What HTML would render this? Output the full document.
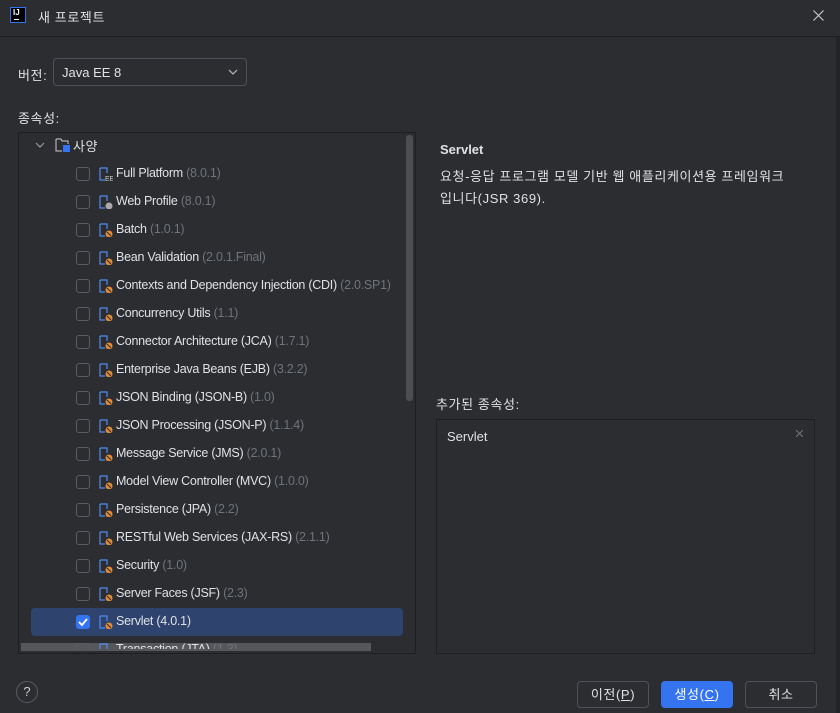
<!DOCTYPE html>
<html><head><meta charset="utf-8"><style>
*{box-sizing:border-box;margin:0;padding:0}
body{width:840px;height:713px;background:#2b2d30;font-family:"Liberation Sans","Noto Sans CJK KR",sans-serif;color:#dfe1e5;font-size:13px;position:relative;overflow:hidden}
.a{position:absolute}
.row{position:absolute;left:31px;width:372px;height:28px}
.cb{position:absolute;left:45px;top:7px;width:14px;height:14px;border:1px solid #5a5d63;border-radius:3px}
.ic{position:absolute;left:68px;top:7px;width:14px;height:14px}
.tx{position:absolute;left:85px;top:6px;white-space:nowrap;font-size:12.5px;letter-spacing:-0.25px}
.v{color:#6f737a}
.btn{position:absolute;top:681px;height:27px;border:1px solid #4e5157;border-radius:4px;text-align:center;line-height:25px}
.ko{letter-spacing:0.6px}
</style></head><body>
<div class="a" style="left:0;top:36px;width:840px;height:1px;background:#1e1f22"></div>
<div class="a" style="left:10px;top:7px;width:16px;height:16px;background:#000;border:1px solid #3574f0"><span style="position:absolute;left:2px;top:0;font-size:8px;color:#fff;font-weight:bold">IJ</span><span style="position:absolute;left:3px;top:11px;width:5px;height:1px;background:#fff"></span></div>
<div class="a ko" style="left:38px;top:7px;font-size:13px">새 프로젝트</div>
<svg class="a" style="left:813px;top:10px" width="11" height="11"><path d="M0.5 0.5l10 10M10.5 0.5l-10 10" stroke="#ccc" stroke-width="1.1"/></svg>
<div class="a ko" style="left:18px;top:65px">버전:</div>
<div class="a" style="left:53px;top:58px;width:194px;height:28px;border:1px solid #4e5157;border-radius:4px;background:#2b2d30"><span style="position:absolute;left:8px;top:6px">Java EE 8</span><svg class="a" style="left:174px;top:10px" width="10" height="7"><path d="M1 1l4 4 4-4" stroke="#aaa" fill="none" stroke-width="1.3"/></svg></div>
<div class="a ko" style="left:18px;top:108px">종속성:</div>
<div class="a" style="left:18px;top:132px;width:398px;height:522px;border:1px solid #1e1f22;overflow:hidden">
<svg class="a" style="left:16px;top:9px" width="10" height="7"><path d="M1 1l4 4 4-4" stroke="#999" fill="none" stroke-width="1.2"/></svg>
<svg class="a" style="left:36px;top:4px" width="16" height="16"><path d="M1 2h5l1 2h6v3M1 2v12h6" stroke="#ccc" fill="none"/><rect x="8" y="8" width="7" height="7" fill="#3574f0"/></svg>
<div class="a ko" style="left:54px;top:3px">사양</div>
<div class="a" style="left:387px;top:2px;width:7px;height:266px;background:#4c4e52;border-radius:3px"></div>
<div class="a" style="left:2px;top:510px;width:350px;height:8px;background:#5a5c60;opacity:.9"></div>
</div>
<div id="rows"></div>
<div class="a" style="left:440px;top:142px;font-weight:bold">Servlet</div>
<div class="a ko" style="left:440px;top:166px;line-height:22px">요청-응답 프로그램 모델 기반 웹 애플리케이션용 프레임워크<br>입니다(JSR 369).</div>
<div class="a ko" style="left:436px;top:394px">추가된 종속성:</div>
<div class="a" style="left:436px;top:419px;width:379px;height:235px;border:1px solid #1e1f22"><span style="position:absolute;left:10px;top:9px">Servlet</span><svg style="position:absolute;right:11px;top:10px" width="7" height="7"><path d="M0 0l7 7M7 0l-7 7" stroke="#777"/></svg></div>
<div class="a" style="left:836px;top:37px;width:4px;height:676px;background:#232427"></div>
<div class="a" style="left:16px;top:681px;width:22px;height:22px;border:1px solid #5a5d63;border-radius:50%;text-align:center;line-height:20px;color:#ccc">?</div>
<div class="btn ko" style="left:577px;width:72px">이전(<u>P</u>)</div>
<div class="btn ko" style="left:661px;width:72px;background:#3574f0;border-color:#3574f0;color:#fff">생성(<u>C</u>)</div>
<div class="btn ko" style="left:745px;width:72px">취소</div>
<script>
var items=[["Full Platform","(8.0.1)","ee"],["Web Profile","(8.0.1)","w"],["Batch","(1.0.1)"],["Bean Validation","(2.0.1.Final)"],["Contexts and Dependency Injection (CDI)","(2.0.SP1)"],["Concurrency Utils","(1.1)"],["Connector Architecture (JCA)","(1.7.1)"],["Enterprise Java Beans (EJB)","(3.2.2)"],["JSON Binding (JSON-B)","(1.0)"],["JSON Processing (JSON-P)","(1.1.4)"],["Message Service (JMS)","(2.0.1)"],["Model View Controller (MVC)","(1.0.0)"],["Persistence (JPA)","(2.2)"],["RESTful Web Services (JAX-RS)","(2.1.1)"],["Security","(1.0)"],["Server Faces (JSF)","(2.3)"],["Servlet","(4.0.1)"],["Transaction (JTA)","(1.3)"]];
var h="";items.forEach(function(it,i){var top=160+i*28;var sel=i==16;var badge=it[2]=="ee"?'<text x="6" y="14" font-size="7" fill="#ccc" font-family="Liberation Sans">EE</text>':it[2]=="w"?'<circle cx="10" cy="11" r="3.5" fill="#aaa"/>':'<circle cx="10" cy="11" r="3.5" fill="#e08a3c"/><path d="M8 9l4 4" stroke="#2b2d30"/>';
h+='<div class="row" style="top:'+top+'px;'+(sel?'background:#2e436e;border-radius:4px;':'')+(i==17?'height:13px;overflow:hidden;':'')+'"><div class="cb" style="'+(sel?'background:#3574f0;border-color:#3574f0':'')+'">'+(sel?'<svg width="12" height="12" style="position:absolute;left:0;top:0"><path d="M2 6l3 3 5-6" stroke="#fff" stroke-width="1.8" fill="none"/></svg>':'')+'</div><svg class="ic" viewBox="0 0 14 14"><path d="M1 1h7v5M1 1v12h5" stroke="#548af7" fill="none" stroke-width="1.2"/>'+badge+'</svg><div class="tx">'+it[0]+' <span class="v"'+(sel?' style="color:#dfe1e5"':'')+'>'+it[1]+'</span></div></div>';});
document.getElementById('rows').innerHTML='<div class="a" style="left:0;top:0;width:415px;height:653px;overflow:hidden">'+h+'</div>';
</script>
</body></html>
